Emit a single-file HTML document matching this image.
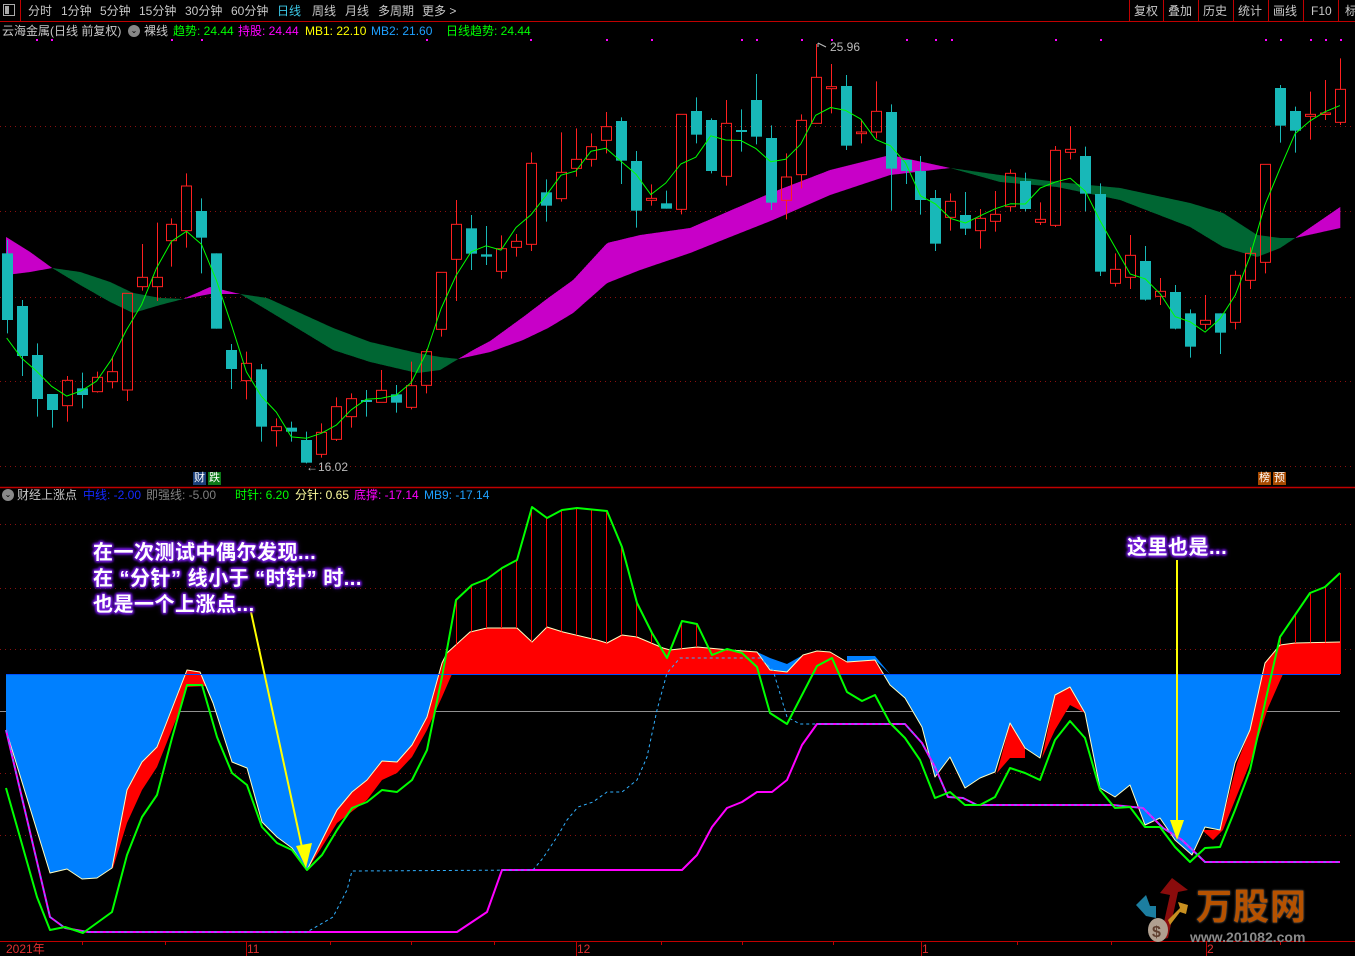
<!DOCTYPE html>
<html><head><meta charset="utf-8">
<style>
html,body{margin:0;padding:0;background:#000;width:1355px;height:956px;overflow:hidden}
body{position:relative;font-family:"Liberation Sans","Noto Sans CJK SC",sans-serif;font-size:12px;color:#c8c8c8}
.t{position:absolute;white-space:nowrap;line-height:14px}
svg{position:absolute;left:0;top:0}
.ann{position:absolute;white-space:nowrap;font-weight:bold;font-size:20px;line-height:26px;color:#fff;letter-spacing:0.5px;
text-shadow:0 0 3px #7a1fe0,0 0 3px #7a1fe0,1px 1px 2px #6010c0,-1px -1px 2px #6010c0,1px -1px 2px #6010c0,-1px 1px 2px #6010c0,0 0 6px #8030ff}
.mk{position:absolute;font-size:11px;line-height:13px;color:#fff;padding:0 1px}
</style></head><body>
<svg id="g" width="1355" height="956" viewBox="0 0 1355 956"></svg>

<div class="t" style="left:3px;top:4px;width:12px;height:12px;border:1px solid #aaa;box-sizing:border-box"></div>
<div class="t" style="left:5px;top:6px;width:4px;height:8px;background:#aaa"></div>
<div class="t" style="left:28px;top:4px">分时</div>
<div class="t" style="left:61px;top:4px">1分钟</div>
<div class="t" style="left:100px;top:4px">5分钟</div>
<div class="t" style="left:139px;top:4px">15分钟</div>
<div class="t" style="left:185px;top:4px">30分钟</div>
<div class="t" style="left:231px;top:4px">60分钟</div>
<div class="t" style="left:277px;top:4px;color:#3cc8e6">日线</div>
<div class="t" style="left:312px;top:4px">周线</div>
<div class="t" style="left:345px;top:4px">月线</div>
<div class="t" style="left:378px;top:4px">多周期</div>
<div class="t" style="left:422px;top:4px">更多 &gt;</div>
<div class="t" style="left:1134px;top:4px">复权</div>
<div class="t" style="left:1168px;top:4px">叠加</div>
<div class="t" style="left:1203px;top:4px">历史</div>
<div class="t" style="left:1238px;top:4px">统计</div>
<div class="t" style="left:1273px;top:4px">画线</div>
<div class="t" style="left:1311px;top:4px">F10</div>
<div class="t" style="left:1345px;top:4px">标</div>

<div class="t" style="left:2px;top:24px">云海金属(日线 前复权)</div>
<div class="t" style="left:128px;top:25px;width:12px;height:12px;border-radius:6px;background:#888;color:#000;font-size:8px;line-height:12px;text-align:center">⌄</div>
<div class="t" style="left:144px;top:24px">裸线</div>
<div class="t" style="left:173px;top:24px;color:#00ff00">趋势: 24.44</div>
<div class="t" style="left:238px;top:24px;color:#ff00ff">持股: 24.44</div>
<div class="t" style="left:305px;top:24px;color:#ffff00">MB1: 22.10</div>
<div class="t" style="left:371px;top:24px;color:#1ea0ff">MB2: 21.60</div>
<div class="t" style="left:446px;top:24px;color:#00ff00">日线趋势: 24.44</div>

<div class="t" style="left:830px;top:40px;color:#bbb">25.96</div>
<div class="t" style="left:306px;top:460px;color:#bbb">←16.02</div>
<div class="mk" style="left:193px;top:472px;background:#1a3f7a">财</div>
<div class="mk" style="left:208px;top:472px;background:#0c7a18">跌</div>
<div class="mk" style="left:1258px;top:472px;background:#a84a00">榜</div>
<div class="mk" style="left:1273px;top:472px;background:#a84a00">预</div>

<div class="t" style="left:2px;top:489px;width:12px;height:12px;border-radius:6px;background:#888;color:#000;font-size:8px;line-height:12px;text-align:center">⌄</div>
<div class="t" style="left:17px;top:488px">财经上涨点</div>
<div class="t" style="left:83px;top:488px;color:#1428ff">中线: -2.00</div>
<div class="t" style="left:146px;top:488px;color:#808080">即强线: -5.00</div>
<div class="t" style="left:235px;top:488px;color:#00ff00">时针: 6.20</div>
<div class="t" style="left:295px;top:488px;color:#ffffa0">分针: 0.65</div>
<div class="t" style="left:354px;top:488px;color:#ff00ff">底撑: -17.14</div>
<div class="t" style="left:424px;top:488px;color:#1ea0ff">MB9: -17.14</div>

<div class="ann" style="left:93px;top:540px">在一次测试中偶尔发现...<br>在 “分针” 线小于 “时针” 时...<br>也是一个上涨点...</div>
<div class="ann" style="left:1127px;top:535px">这里也是...</div>

<div class="t" style="left:6px;top:942px;color:#e03030">2021年</div>
<div class="t" style="left:247px;top:942px;color:#e03030">11</div>
<div class="t" style="left:577px;top:942px;color:#e03030">12</div>
<div class="t" style="left:922px;top:942px;color:#e03030">1</div>
<div class="t" style="left:1207px;top:942px;color:#e03030">2</div>

<div class="t" style="left:1196px;top:886px;font-size:36px;line-height:42px;font-weight:bold;color:#b65200;letter-spacing:1px;text-shadow:0 0 2px #777">万股网</div>
<div class="t" style="left:1190px;top:930px;font-size:14px;font-weight:bold;color:#8a8a8a">www.201082.com</div>

<script>
var S='';
function L(x1,y1,x2,y2,c,w,d){S+='<line x1="'+x1+'" y1="'+y1+'" x2="'+x2+'" y2="'+y2+'" stroke="'+c+'" stroke-width="'+(w||1)+'"'+(d?' stroke-dasharray="'+d+'"':'')+'/>';}
function PL(p,c,w,d){S+='<polyline fill="none" points="'+p.map(function(a){return a.join(',')}).join(' ')+'" stroke="'+c+'" stroke-width="'+(w||1)+'"'+(d?' stroke-dasharray="'+d+'"':'')+' stroke-linejoin="round"/>';}
function PG(p,c){S+='<polygon points="'+p.map(function(a){return a.join(',')}).join(' ')+'" fill="'+c+'"/>';}
function R(x,y,w,h,f,s){S+='<rect x="'+x+'" y="'+y+'" width="'+w+'" height="'+h+'" fill="'+f+'"'+(s?' stroke="'+s+'"':'')+'/>';}
function interp(p,x){if(x<=p[0][0])return p[0][1];for(var i=1;i<p.length;i++){if(x<=p[i][0]){var a=p[i-1],b=p[i];return a[1]+(b[1]-a[1])*(x-a[0])/(b[0]-a[0]);}}return p[p.length-1][1];}

L(0,21.5,1355,21.5,'#c00000',1);
L(20.5,0,20.5,21,'#c00000',1);
[1129,1163,1198,1233,1268,1303,1338].forEach(function(x){L(x+.5,0,x+.5,21,'#c00000',1);});
L(0,487.5,1355,487.5,'#c00000',1.5);
L(0,941.5,1355,941.5,'#c00000',1);
[246,576,921,1206].forEach(function(x){L(x+.5,941,x+.5,956,'#c00000',1);});
[82,165,330,411,494,661,742,833,1017,1111,1280].forEach(function(x){L(x+.5,941,x+.5,945,'#c00000',1);});
[126,211,297,381,466].forEach(function(y){L(0,y+.5,1355,y+.5,'#8a1010',1,'1 4');});
[36,51,171,201,426,530,606,651,741,756,801,831,906,935,951,1055,1100,1265,1280,1310,1325,1340].forEach(function(x){R(x,39,2,2,'#ff00ff');});

var A=[[6,237],[30,252],[52,268],[80,285],[110,302],[133,313],[160,305],[183,299],[210,287],[240,294],[267,310],[300,330],[333,350],[370,362],[417,373],[440,370],[458,359],[473,350],[490,341],[523,317],[548,298],[573,280],[607,243],[640,235],[690,228],[720,215],[773,192],[830,170],[890,155],[950,168],[1000,182],[1057,187],[1120,200],[1190,227],[1223,247],[1257,257],[1280,248],[1295,238],[1340,207]];
var B=[[6,275],[30,272],[52,268],[80,272],[110,282],[133,293],[160,298],[183,299],[210,294],[240,294],[267,298],[300,313],[333,328],[370,342],[417,353],[440,357],[458,359],[490,352],[523,340],[548,328],[573,313],[607,283],[640,270],[690,253],[730,237],[773,220],[830,195],[890,175],[950,168],[1000,175],[1057,182],[1120,188],[1190,203],[1223,213],[1257,235],[1280,238],[1295,238],[1340,228]];
for(var x=6;x<1340;x+=2){var a1=interp(A,x),b1=interp(B,x),a2=interp(A,x+2),b2=interp(B,x+2);
 var c=((a1+a2)<(b1+b2))?'#c800c8':'#006633';PG([[x,a1],[x+2.3,a2],[x+2.3,b2],[x,b1]],c);}

var C=[
['c',640,840,600,880],['c',798,948,780,1008],['c',945,1077,910,1130],['c',1062,1110,1062,1163],['r',1021,1097,1008,1145],
['c',1045,1065,998,1105],['r',1012,1055,995,1058],['r',995,1025,950,1045],['r',760,1050,760,1083],['r',712,740,612,752],
['r',712,740,548,783],['r',553,602,535,680],['r',438,572,400,623],['c',513,593,475,700],['c',640,866,640,866],
['c',930,987,912,1047],['r',970,1022,935,1078],['c',988,1160,972,1205],['r',1160,1172,1135,1220],['c',1163,1175,1145,1205],
['c',1200,1268,1175,1270],['r',1177,1243,1150,1253],['r',1100,1198,1072,1203],['r',1076,1130,1060,1163],['c',1080,1085,1050,1130],
['r',1051,1087,990,1087],['c',1063,1088,1035,1118],['r',1037,1102,965,1108],['r',935,1036,928,1060],['r',697,868,697,890],
['r',553,658,480,783],['c',565,641,525,690],['c',643,650,558,675],['r',626,694,586,716],['r',604,622,582,650],
['r',370,613,337,633],['c',457,497,418,545],['r',397,476,277,485],['r',358,385,265,410],['r',320,358,280,380],
['r',260,301,216,340],['c',243,362,232,432],['c',363,512,333,563],['r',475,481,433,497],['c',490,506,452,506],
['r',223,508,223,523],['c',213,284,172,310],['c',240,393,235,400],['r',250,409,180,437],['c',270,273,208,335],
['c',180,290,102,313],['c',294,488,256,510],['r',411,481,340,538],['r',241,404,223,445],['r',112,250,12,250],
['r',140,146,72,220],['c',138,317,105,330],['r',276,281,238,310],['r',214,276,124,295],['c',216,386,193,512],
['c',360,393,360,432],['c',393,480,348,524],['c',474,611,450,633],['r',484,532,460,572],['c',525,566,456,585],
['r',535,572,507,626],['r',523,544,453,575],['r',400,500,388,514],['c',423,507,398,514],['r',538,547,487,555],
['r',331,556,318,561],['r',328,337,258,358],['c',348,461,320,514],['c',462,695,430,708],['r',688,730,640,740],
['r',646,712,585,747],['c',663,779,618,782],['r',754,769,714,795],['c',756,866,735,868],['c',820,920,808,953],
['r',841,853,765,868],['c',820,878,820,942],['r',706,847,692,868],['r',640,721,622,747],['r',373,667,373,700],
['c',144,257,135,308],['c',213,272,200,338],['r',223,229,155,299],['r',219,223,120,240],['r',148,247,55,255]];
var closes=[];
C.forEach(function(k,i){var x=6.7+i*14.98;var t=40+k[1]/3,b=40+k[2]/3,h=40+k[3]/3,l=40+k[4]/3;
 var xi=Math.round(x)+.5;
 if(k[0]=='r'){L(xi,h,xi,t,'#ff2020',1);L(xi,b,xi,l,'#ff2020',1);R(Math.round(x)-4.5,t,10,Math.max(b-t,1.5),'none','#ff2020');closes.push([x,t]);}
 else{L(xi,h,xi,l,'#18b8b8',1);R(Math.round(x)-5,t,11,Math.max(b-t,2),'#18b8b8');closes.push([x,b]);}
});
var ma=[];for(var i=0;i<closes.length;i++){var s=0,n=0;for(var j=Math.max(0,i-2);j<=Math.min(closes.length-1,i+1);j++){s+=closes[j][1];n++;}ma.push([closes[i][0].toFixed(1),(s/n).toFixed(1)]);}
PL(ma,'#00ff00',1);
L(818,43,826,47,'#bbb',1);L(818,43,818,47,'#bbb',1);

[524,588,649,773,835].forEach(function(y){L(0,y+.5,1355,y+.5,'#8a1010',1,'1 4');});
L(0,711.5,1340,711.5,'#909090',1);
var F=[[6,730],[50,873],[67,869],[82,879],[97,878],[112,868],[127,790],[142,762],[157,747],[187,670],[200,672],[213,703],[232,762],[247,768],[262,822],[277,837],[292,848],[307,870],[337,810],[352,792],[367,780],[382,761],[397,762],[412,745],[427,717],[442,663],[447,653],[470,632],[487,628],[517,628],[532,642],[547,627],[563,632],[597,640],[607,643],[622,635],[637,637],[663,648],[670,650],[697,647],[730,650],[757,652],[770,670],[787,672],[803,655],[817,651],[830,652],[847,662],[875,660],[890,685],[905,698],[922,727],[935,777],[950,757],[965,788],[980,778],[995,772],[1010,723],[1025,748],[1040,758],[1055,695],[1070,687],[1085,713],[1100,788],[1115,797],[1130,785],[1145,825],[1160,818],[1175,840],[1192,855],[1205,827],[1220,830],[1235,763],[1250,730],[1265,663],[1280,645],[1295,643],[1340,642]];
var blue=[[6,674]];
for(var x=6;x<=1340;x+=1){var y=interp(F,x);blue.push([x,Math.max(y,674)]);}
blue.push([1340,674]);PG(blue,'#0080ff');
var rp=[[6,674]];for(var x=6;x<=1340;x+=1){var y=interp(F,x);rp.push([x,Math.min(y,674)]);}rp.push([1340,674]);PG(rp,'#ff0000');
PG([[112,868],[127,790],[142,762],[157,747],[187,670],[200,672],[206,686],[187,687],[177,717],[157,767],[142,790],[127,823],[113,868]],'#ff0000');
PG([[307,870],[337,810],[352,792],[367,780],[382,761],[397,762],[412,745],[427,717],[442,663],[452,674],[442,697],[427,730],[412,757],[397,773],[382,780],[367,800],[337,823],[320,850]],'#ff0000');
PG([[997,773],[1010,723],[1025,748],[1025,758],[1010,758]],'#ff0000');
PG([[1042,758],[1055,695],[1070,687],[1085,713],[1070,705],[1055,730]],'#ff0000');
PG([[1202,830],[1220,830],[1237,763],[1250,730],[1265,663],[1283,674],[1268,708],[1250,763],[1223,830],[1213,840]],'#ff0000');
PG([[757,652],[770,658],[787,664],[803,655],[787,672],[770,670]],'#0080ff');
PG([[847,656],[875,656],[890,674],[875,660],[847,662]],'#0080ff');
PL(F,'#ffffc0',1);
L(6,674.5,1340,674.5,'#0050ff',1);
var G=[[6,788],[37,897],[50,930],[65,927],[83,933],[112,912],[127,855],[142,817],[157,795],[172,738],[187,685],[202,685],[217,737],[232,773],[247,785],[262,827],[277,843],[292,850],[307,870],[322,855],[337,830],[352,808],[367,802],[382,790],[397,792],[412,780],[427,750],[442,677],[456,600],[472,585],[487,579],[502,568],[517,560],[532,507],[547,518],[562,510],[577,508],[607,511],[622,547],[637,603],[652,633],[667,658],[682,621],[697,624],[712,655],[727,649],[742,653],[757,667],[770,713],[787,724],[802,695],[817,666],[832,658],[847,692],[862,701],[875,695],[890,723],[905,738],[920,760],[935,798],[950,792],[965,805],[980,805],[995,797],[1010,768],[1025,773],[1040,780],[1055,740],[1070,721],[1085,738],[1100,790],[1115,808],[1130,807],[1145,827],[1160,827],[1175,847],[1190,862],[1205,848],[1220,847],[1235,810],[1250,770],[1265,703],[1280,637],[1295,615],[1310,593],[1325,587],[1340,573]];
for(var i=0;i<90;i++){var x=Math.round(6.7+i*14.98)+.5;var g=interp(G,x),f=interp(F,x);if(f-g>4&&x>440)L(x,g,x,f,'#ff0000',1);}
L(1340.5,573,1340.5,674,'#ff0000',1);
var M=[[6,730],[50,917],[65,928],[88,932],[457,932],[487,912],[502,870],[682,870],[697,855],[712,827],[727,808],[742,802],[757,792],[772,792],[787,780],[802,745],[817,724],[905,724],[922,743],[935,767],[948,797],[963,798],[977,805],[1113,805],[1143,808],[1163,828],[1182,840],[1205,862],[1340,862]];
PL(M,'#ff00ff',2);
var D=[[6,730],[50,917],[65,928],[88,932],[307,932],[333,917],[347,890],[352,871],[533,870],[543,858],[557,837],[567,820],[578,807],[593,802],[607,792],[622,792],[637,780],[647,757],[657,710],[667,673],[680,658],[760,658],[773,670],[787,717],[800,724],[905,724],[922,743],[935,767],[948,797],[963,798],[977,805],[1113,805],[1143,808],[1163,828],[1182,840],[1205,862],[1340,862]];
PL(D,'#30b0ff',1,'3 3');
PL(G,'#00ff00',2);
L(251,612,303,852,'#ffff00',2);PG([[296,846],[312,843],[306,868]],'#ffff00');
L(1177,560,1177,822,'#ffff00',2);PG([[1170,820],[1184,820],[1177,840]],'#ffff00');
PG([[1160,940],[1170,895],[1160,893],[1172,878],[1188,890],[1178,892],[1168,938]],'#8a0c0c');
PG([[1136,905],[1146,895],[1150,906],[1156,906],[1156,918],[1146,916]],'#1c7ea0');
PG([[1168,920],[1180,908],[1178,902],[1188,905],[1186,914],[1180,912],[1170,925]],'#c89020');
S+='<ellipse cx="1158" cy="930" rx="10" ry="12" fill="#b0a090"/>';
S+='<text x="1152" y="937" font-family="Liberation Sans" font-size="16" font-weight="bold" fill="#604030">$</text>';
document.getElementById('g').innerHTML=S;
</script>
</body></html>
